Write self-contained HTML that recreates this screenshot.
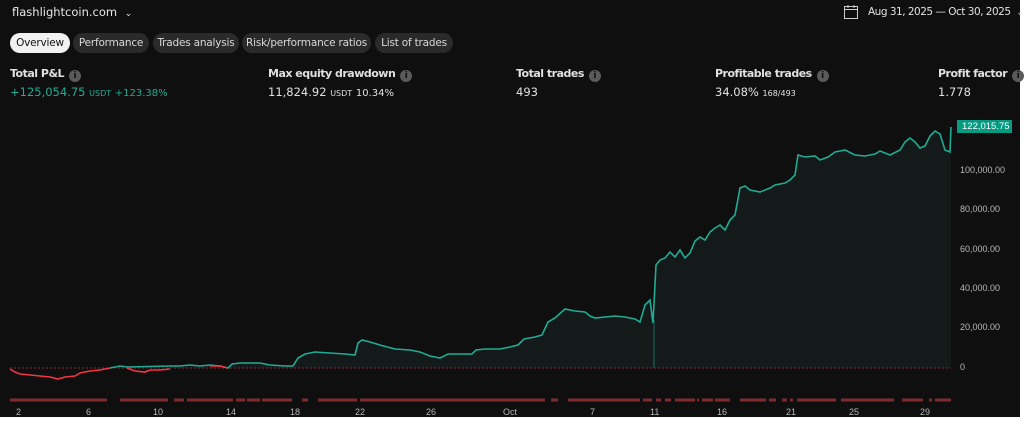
<!DOCTYPE html><html><head><style>
body{margin:0;width:1024px;height:435px;background:#fff;overflow:hidden;font-family:"DejaVu Sans","Liberation Sans",sans-serif}
#m{position:absolute;left:0;top:0;width:1020px;height:417px;background:#0f0f0f;color:#dbdbdb}
.t{position:absolute;font-size:11px;white-space:nowrap}
.tab{position:absolute;top:33px;height:20px;line-height:20px;border-radius:10px;background:#2a2a2a;color:#d8d8d8;font-size:10.5px;text-align:center;white-space:nowrap;letter-spacing:-0.2px}
.lb{position:absolute;top:67px;font-size:11px;font-weight:bold;color:#e0e0e0;white-space:nowrap;letter-spacing:-0.5px}
.i{display:inline-block;width:12px;height:12px;border-radius:6px;background:#5a5a5a;color:#0f0f0f;font-size:9px;line-height:12px;text-align:center;margin-left:5px;vertical-align:-1px;font-weight:bold;letter-spacing:0}
.v{position:absolute;top:85px;font-size:11.5px;color:#e0e0e0;white-space:nowrap}
.s{font-size:8px}
.ax{position:absolute;font-size:9px;color:#b8b8b8;font-family:"Liberation Sans",sans-serif}
</style></head><body><div id="m">
<div class="t" style="left:12px;top:5px;font-size:11.5px;color:#e8e8e8">flashlightcoin.com <span style="font-size:9px;margin-left:4px">&#8964;</span></div>
<svg style="position:absolute;left:843px;top:4px" width="16" height="16" viewBox="0 0 16 16"><rect x="1.5" y="2.5" width="13" height="12" fill="none" stroke="#ccc"/><line x1="1.5" y1="5.5" x2="14.5" y2="5.5" stroke="#ccc"/><line x1="5" y1="1" x2="5" y2="4" stroke="#ccc"/><line x1="11" y1="1" x2="11" y2="4" stroke="#ccc"/></svg>
<div class="t" style="left:868px;top:6px;color:#e0e0e0;font-size:10.5px;letter-spacing:-0.5px">Aug 31, 2025 — Oct 30, 2025 <span style="font-size:9px;margin-left:3px">&#8964;</span></div>
<div class="tab" style="left:10px;width:60px;background:#f2f2f2;color:#111">Overview</div>
<div class="tab" style="left:73px;width:76px">Performance</div>
<div class="tab" style="left:153px;width:86px">Trades analysis</div>
<div class="tab" style="left:242px;width:129px">Risk/performance ratios</div>
<div class="tab" style="left:375px;width:78px">List of trades</div>
<div class="lb" style="left:10px">Total P&amp;L<span class="i">i</span></div>
<div class="lb" style="left:268px">Max equity drawdown<span class="i">i</span></div>
<div class="lb" style="left:516px">Total trades<span class="i">i</span></div>
<div class="lb" style="left:715px">Profitable trades<span class="i">i</span></div>
<div class="lb" style="left:938px">Profit factor<span class="i">i</span></div>
<div class="v" style="left:10px;color:#22ab94">+125,054.75 <span class="s">USDT</span> <span style="font-size:10px">+123.38%</span></div>
<div class="v" style="left:268px">11,824.92 <span class="s">USDT</span> <span style="font-size:10px">10.34%</span></div>
<div class="v" style="left:516px">493</div>
<div class="v" style="left:715px">34.08% <span class="s">168/493</span></div>
<div class="v" style="left:938px">1.778</div>
<svg style="position:absolute;left:0;top:0" width="1020" height="417">
<polygon fill="#131a19" points="170,366 180,366 190,365 200,366 210,365 220,366 228,368 232,364 240,363 250,363 260,363 270,365 285,366 293,366 298,358 305,354 315,352 330,353 345,354 355,355 358,343 362,340 370,342 380,345 395,349 410,350 420,352 430,356 440,358 448,354 460,354 472,354 476,350 485,349 500,349 510,347 518,345 524,339 535,337 542,335 548,322 555,318 565,309 575,311 585,312 590,316 595,318 605,317 615,316 625,317 635,319 640,322 645,305 650,300 653,323 656,265 660,260 665,258 670,252 675,257 680,250 685,258 690,253 695,241 700,237 705,240 710,232 715,228 720,225 725,230 730,220 735,215 740,188 745,186 750,190 760,192 770,188 775,185 785,183 790,180 795,175 798,155 805,157 815,156 820,160 828,157 835,152 845,150 855,155 865,156 875,154 880,151 890,155 900,150 905,142 910,138 915,142 920,148 925,146 930,136 935,131 940,134 945,150 950,152 951,127 951,368 170,368"/>
<line x1="10" y1="368" x2="951" y2="368" stroke="#5a2226" stroke-width="1.5" stroke-dasharray="2,2"/>
<line x1="654" y1="368" x2="654" y2="320" stroke="#1d6e60"/>
<polyline fill="none" stroke="#22ab94" stroke-width="1.6" points="110,368 120,366 127,367 170,366 180,366 190,365 200,366 210,365 220,366 228,368 232,364 240,363 250,363 260,363 270,365 285,366 293,366 298,358 305,354 315,352 330,353 345,354 355,355 358,343 362,340 370,342 380,345 395,349 410,350 420,352 430,356 440,358 448,354 460,354 472,354 476,350 485,349 500,349 510,347 518,345 524,339 535,337 542,335 548,322 555,318 565,309 575,311 585,312 590,316 595,318 605,317 615,316 625,317 635,319 640,322 645,305 650,300 653,323 656,265 660,260 665,258 670,252 675,257 680,250 685,258 690,253 695,241 700,237 705,240 710,232 715,228 720,225 725,230 730,220 735,215 740,188 745,186 750,190 760,192 770,188 775,185 785,183 790,180 795,175 798,155 805,157 815,156 820,160 828,157 835,152 845,150 855,155 865,156 875,154 880,151 890,155 900,150 905,142 910,138 915,142 920,148 925,146 930,136 935,131 940,134 945,150 950,152 951,127"/>
<polyline fill="none" stroke="#f23645" stroke-width="1.6" points="10,369 15,372 20,374 30,375 40,376 50,377 58,379 65,377 75,376 80,373 90,371 100,370 110,368"/>
<polyline fill="none" stroke="#f23645" stroke-width="1.6" points="127,368 135,371 145,372 150,370 160,370 170,369"/>
<polyline fill="none" stroke="#f23645" stroke-width="1.6" points="210,366 220,366 228,368"/>
<g stroke="#7f2a2f" stroke-width="3">
<line x1="10" y1="400" x2="107" y2="400"/><line x1="120" y1="400" x2="168" y2="400"/><line x1="174" y1="400" x2="184" y2="400"/><line x1="187" y1="400" x2="233" y2="400"/><line x1="236" y1="400" x2="245" y2="400"/><line x1="247" y1="400" x2="260" y2="400"/><line x1="262" y1="400" x2="292" y2="400"/><line x1="302" y1="400" x2="308" y2="400"/><line x1="318" y1="400" x2="357" y2="400"/><line x1="360" y1="400" x2="545" y2="400"/><line x1="551" y1="400" x2="558" y2="400"/><line x1="568" y1="400" x2="640" y2="400"/><line x1="643" y1="400" x2="652" y2="400"/><line x1="656" y1="400" x2="661" y2="400"/><line x1="665" y1="400" x2="671" y2="400"/><line x1="675" y1="400" x2="695" y2="400"/><line x1="697" y1="400" x2="699" y2="400"/><line x1="702" y1="400" x2="713" y2="400"/><line x1="715" y1="400" x2="730" y2="400"/><line x1="740" y1="400" x2="766" y2="400"/><line x1="769" y1="400" x2="776" y2="400"/><line x1="782" y1="400" x2="787" y2="400"/><line x1="790" y1="400" x2="793" y2="400"/><line x1="797" y1="400" x2="836" y2="400"/><line x1="841" y1="400" x2="894" y2="400"/><line x1="902" y1="400" x2="923" y2="400"/><line x1="929" y1="400" x2="932" y2="400"/><line x1="935" y1="400" x2="951" y2="400"/>
</g>
<rect x="957" y="120" width="55" height="13" fill="#089981"/>
</svg>
<div class="ax" style="left:962px;top:121px;color:#fff;font-size:9.5px">122,015.75</div>
<div class="ax" style="left:960px;top:165px">100,000.00</div>
<div class="ax" style="left:960px;top:204px">80,000.00</div>
<div class="ax" style="left:960px;top:244px">60,000.00</div>
<div class="ax" style="left:960px;top:283px">40,000.00</div>
<div class="ax" style="left:960px;top:322px">20,000.00</div>
<div class="ax" style="left:960px;top:362px">0</div>
<div class="ax" style="left:16px;top:407px">2</div><div class="ax" style="left:86px;top:407px">6</div><div class="ax" style="left:153px;top:407px">10</div><div class="ax" style="left:226px;top:407px">14</div><div class="ax" style="left:290px;top:407px">18</div><div class="ax" style="left:355px;top:407px">22</div><div class="ax" style="left:426px;top:407px">26</div><div class="ax" style="left:503px;top:407px">Oct</div><div class="ax" style="left:590px;top:407px">7</div><div class="ax" style="left:650px;top:407px">11</div><div class="ax" style="left:717px;top:407px">16</div><div class="ax" style="left:786px;top:407px">21</div><div class="ax" style="left:849px;top:407px">25</div><div class="ax" style="left:920px;top:407px">29</div>
</div></body></html>
